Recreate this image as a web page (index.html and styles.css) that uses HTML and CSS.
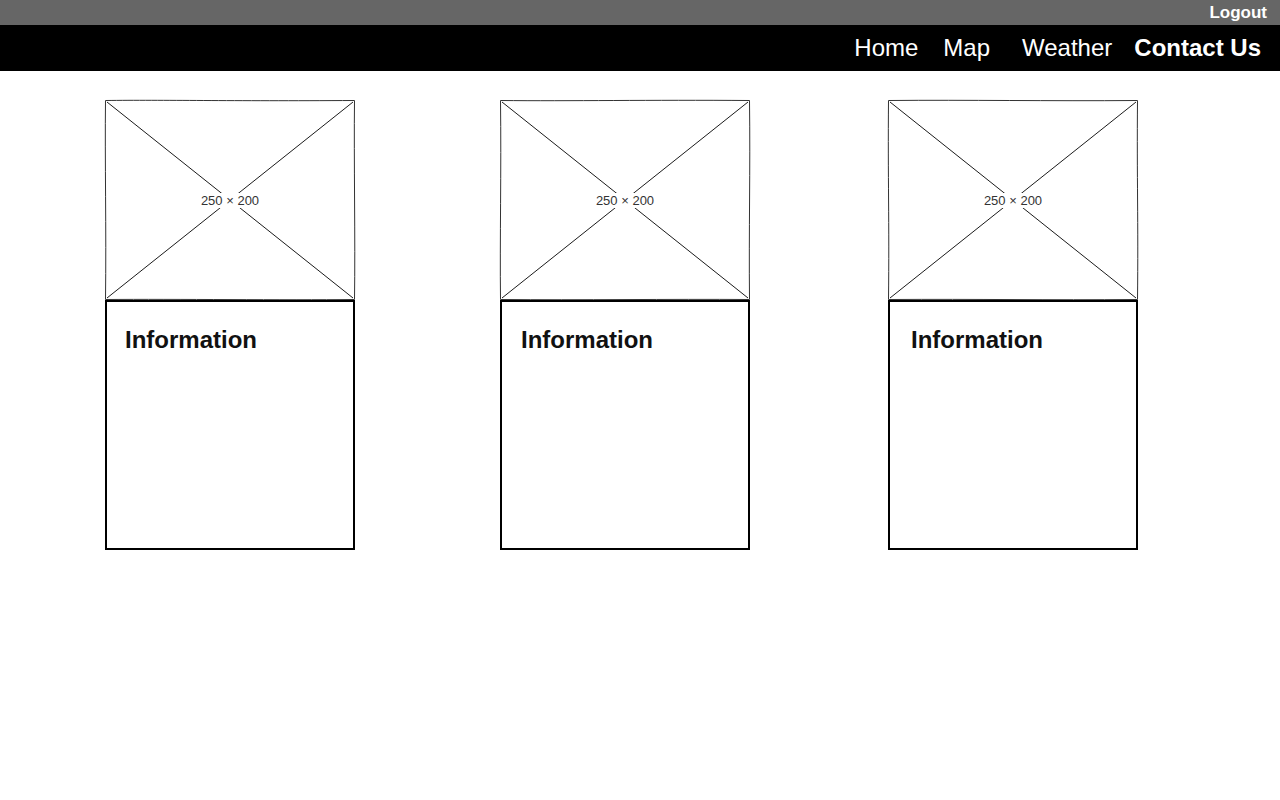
FILE: index.html
```html
<!DOCTYPE html>
<html>
<head>
<meta charset="utf-8">
<title>Wireframe</title>
<link rel="stylesheet" href="styles.css">
</head>
<body>
<div class="topbar"><a class="logout" href="#">Logout</a></div>
<nav class="nav">
  <a class="nav-link" href="#">Home</a>
  <a class="nav-link nav-map" href="#">Map</a>
  <a class="nav-link nav-weather" href="#">Weather</a>
  <a class="nav-link nav-contact" href="#">Contact Us</a>
</nav>
<main class="cards">
  <div class="card">
    <svg class="ph" width="250" height="200" viewBox="0 0 250 200">
      <path class="ph-border" d="M0.5 0.5 C60 -0.2 120 1.2 249.5 0.5 C248.8 60 250.4 140 249.5 199.5 C180 200.2 70 199 0.5 199.5 C1.4 130 -0.2 60 0.5 0.5 Z"/>
      <line class="ph-x" x1="2" y1="2" x2="248" y2="198"/>
      <line class="ph-x" x1="248" y1="2" x2="2" y2="198"/>
      <rect x="94" y="93" width="62" height="15" fill="#fff"/>
      <text class="ph-text" x="125" y="105" text-anchor="middle">250 × 200</text>
    </svg>
    <div class="info info-1"><h2 class="info-title">Information</h2></div>
  </div>
  <div class="card card-2">
    <svg class="ph" width="250" height="200" viewBox="0 0 250 200">
      <path class="ph-border" d="M0.5 0.5 C70 1.2 150 -0.2 249.5 0.5 C250.4 70 248.8 130 249.5 199.5 C170 199 80 200.2 0.5 199.5 C-0.2 140 1.4 70 0.5 0.5 Z"/>
      <line class="ph-x" x1="2" y1="2" x2="248" y2="198"/>
      <line class="ph-x" x1="248" y1="2" x2="2" y2="198"/>
      <rect x="94" y="93" width="62" height="15" fill="#fff"/>
      <text class="ph-text" x="125" y="105" text-anchor="middle">250 × 200</text>
    </svg>
    <div class="info info-2"><h2 class="info-title">Information</h2></div>
  </div>
  <div class="card card-3">
    <svg class="ph" width="250" height="200" viewBox="0 0 250 200">
      <path class="ph-border" d="M0.5 0.5 C80 -0.2 160 1.2 249.5 0.5 C248.8 80 250.4 120 249.5 199.5 C160 200.2 90 199 0.5 199.5 C1.4 120 -0.2 80 0.5 0.5 Z"/>
      <line class="ph-x" x1="2" y1="2" x2="248" y2="198"/>
      <line class="ph-x" x1="248" y1="2" x2="2" y2="198"/>
      <rect x="94" y="93" width="62" height="15" fill="#fff"/>
      <text class="ph-text" x="125" y="105" text-anchor="middle">250 × 200</text>
    </svg>
    <div class="info info-3"><h2 class="info-title">Information</h2></div>
  </div>
</main>
</body>
</html>
```

FILE: styles.css
```css
* { box-sizing: border-box; }
html, body { margin: 0; padding: 0; background: #fff; }
body { font-family: "Liberation Sans", Arial, sans-serif; }

.topbar {
  height: 25px;
  background: #666666;
  display: flex;
  justify-content: flex-end;
  align-items: center;
  padding-right: 13px;
}
.logout {
  color: #fff;
  font-weight: bold;
  font-size: 17px;
  text-decoration: none;
  line-height: 1;
}

.nav {
  height: 46px;
  background: #000;
  display: flex;
  justify-content: flex-end;
  align-items: center;
  padding-right: 19px;
}
.nav-link {
  color: #fff;
  font-size: 24px;
  text-decoration: none;
  line-height: 1;
}
.nav-map { margin-left: 25px; }
.nav-weather { margin-left: 32px; }
.nav-contact { margin-left: 22px; font-weight: bold; }

.cards {
  display: flex;
  align-items: flex-start;
  padding: 29px 0 0 105px;
}
.card { width: 250px; display: flex; flex-direction: column; }
.card-2 { margin-left: 145px; }
.card-3 { margin-left: 138px; }

.ph { display: block; overflow: visible; }
.ph-border { fill: #fff; stroke: #333; stroke-width: 1; }
.ph-x { stroke: #000; stroke-width: 0.9; }
.ph-text { font-family: "Liberation Sans", Arial, sans-serif; font-size: 13px; fill: #333; }

.info {
  width: 250px;
  height: 250px;
  border: 2px solid #000;
  padding: 26px 0 0 18px;
}
.info-2 { padding-left: 19px; }
.info-3 { padding-left: 21px; }
.info-title {
  margin: 0;
  font-size: 24px;
  font-weight: bold;
  color: #111;
  line-height: 1;
}
```
